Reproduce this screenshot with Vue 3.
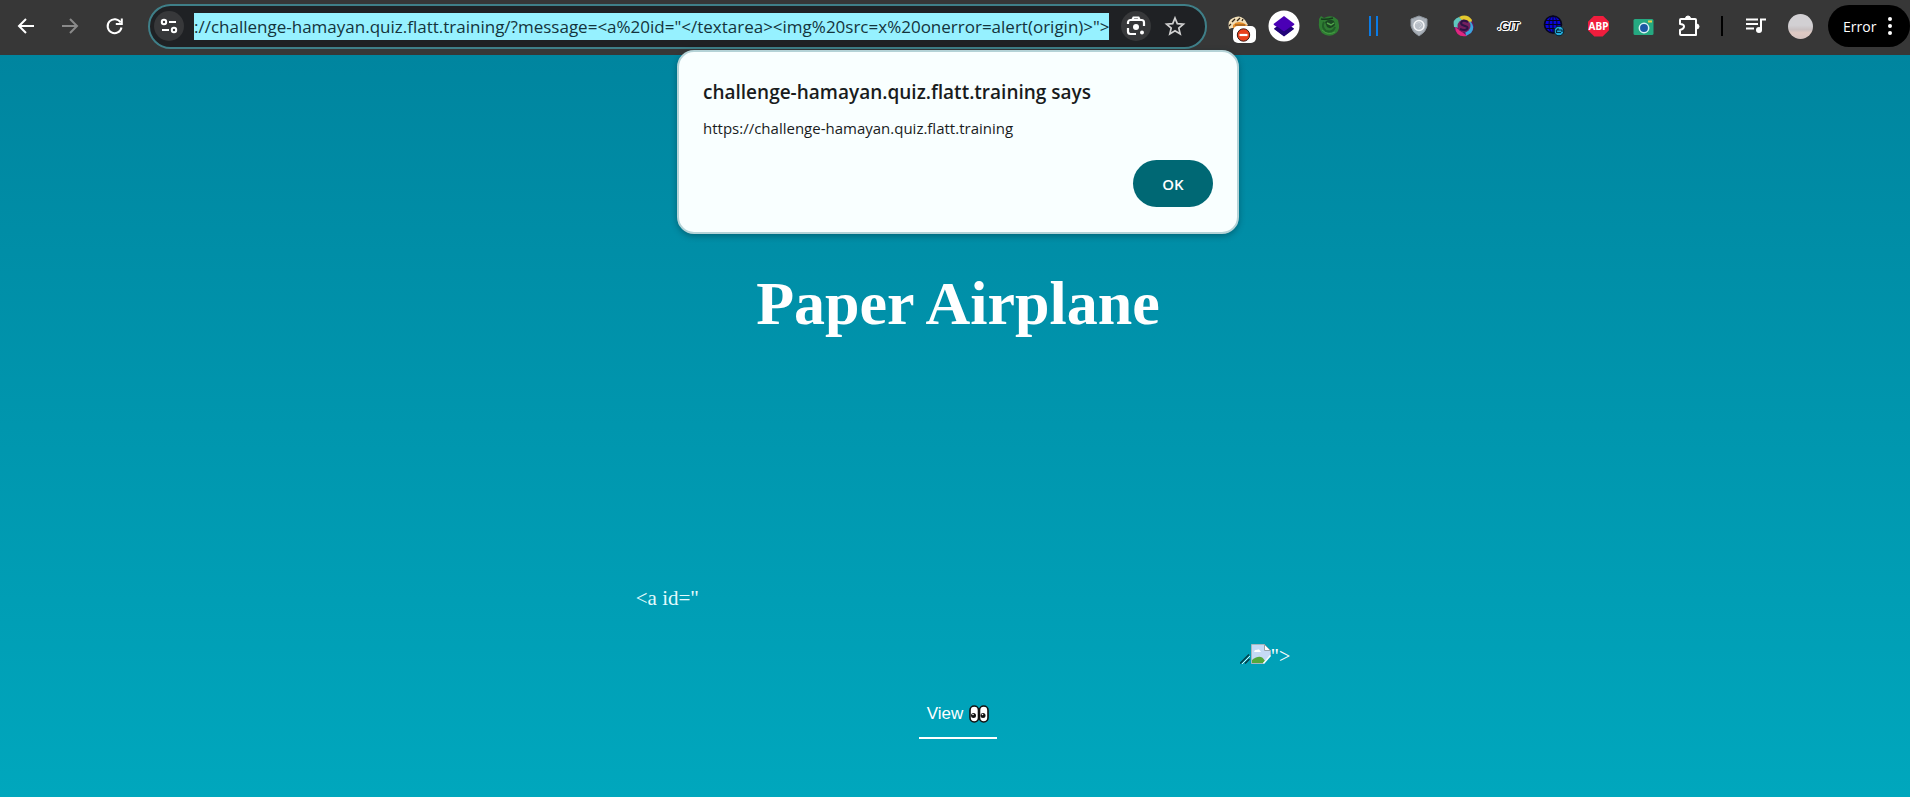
<script setup>
import { ref } from 'vue'

const address = ref('://challenge-hamayan.quiz.flatt.training/?message=<a%20id="</textarea><img%20src=x%20onerror=alert(origin)>">')
const message = ref('<a id="')
const dialogOpen = ref(true)
</script>

<template>
  <div class="browser">
    <header class="toolbar">
      <nav class="nav" aria-label="Navigation">
        <button class="nav-btn" aria-label="Back">
          <svg width="24" height="24" viewBox="0 0 24 24"><path d="M20 12H5M12 5l-7 7 7 7" fill="none" stroke="#fff" stroke-width="2" /></svg>
        </button>
        <button class="nav-btn" aria-label="Forward">
          <svg width="24" height="24" viewBox="0 0 24 24"><path d="M4 12h15M12 5l7 7-7 7" fill="none" stroke="#8a8a8a" stroke-width="2" /></svg>
        </button>
        <button class="nav-btn" aria-label="Reload">
          <svg width="24" height="24" viewBox="0 0 24 24"><path d="M18.600 8.500A7 7 0 1 0 19.500 13.500M19.800 4.500v5.400h-6" fill="none" stroke="#fff" stroke-width="2" /></svg>
        </button>
      </nav>

      <div class="omnibox">
        <button class="round" aria-label="Site information">
          <svg width="20" height="20" viewBox="0 0 20 20" fill="none" stroke="#fff" stroke-width="2"><circle cx="5" cy="6" r="2.2" /><path d="M10 6h7M3 14h7" /><circle cx="15" cy="14" r="2.2" /></svg>
        </button>
        <input v-model="address" class="address" type="text" aria-label="Address" spellcheck="false">
        <button class="round" aria-label="Search with Lens">
          <svg width="22" height="22" viewBox="0 0 22 22" fill="none" stroke="#fff" stroke-width="2.2">
            <path d="M3 9V7.500A2.500 2.500 0 0 1 5.500 5h11A2.500 2.500 0 0 1 19 7.500V11M3 13v3.500A2.500 2.500 0 0 0 5.500 19H11M7.500 4.500l1-2h5l1 2" />
            <circle cx="11" cy="12" r="3" fill="#fff" stroke="none" /><circle cx="17" cy="17.500" r="2" fill="#fff" stroke="none" />
          </svg>
        </button>
        <button class="round plain" aria-label="Bookmark this page">
          <svg width="22" height="22" viewBox="0 0 22 22"><path d="M11 3l2.300 5.600 6.100.5-4.600 4 1.400 5.900-5.200-3.200-5.200 3.200 1.400-5.900-4.600-4 6.100-.5z" fill="none" stroke="#d0d0d0" stroke-width="1.700" /></svg>
        </button>
      </div>

      <div class="extensions">
        <button class="ext" aria-label="Blocked extension">
          <svg width="36" height="36" viewBox="0 0 36 36">
            <path d="M8 21Q6 12 12 10q7-4 12 2l3 5-4 3H11z" fill="#f1dfb8" />
            <path d="M11 14l3-3m2 2l3-3m2 3l1-2M8 18l2-2" stroke="#35291c" stroke-width="1.300" />
            <path d="M12 17q5-6 14 0l-2 3H12z" fill="#e9912b" /><path d="M14 17h10" stroke="#74451a" />
            <rect x="12" y="18" width="23" height="17" rx="5" fill="#fff" />
            <circle cx="22.500" cy="27" r="6.200" fill="#e8401c" stroke="#3b1b14" /><path d="M18.500 27h8" stroke="#fff" stroke-width="2.200" />
          </svg>
        </button>
        <button class="ext" aria-label="Layers">
          <svg width="32" height="32" viewBox="0 0 32 32"><circle cx="16" cy="16" r="15.500" fill="#fff" /><path d="M6 19l4-3h12l4 3-10 7.500z" fill="#220479" /><path d="M6 15l-.5-1L16 6l10.500 8-.5 1-10 7z" fill="#4a00b5" /><path d="M6 18.500l3-2 7 5 7-5 3 2-10 7.500z" fill="#220479" /></svg>
        </button>
        <button class="ext" aria-label="Green swirl">
          <svg width="24" height="24" viewBox="0 0 24 24"><path d="M2 5l2-3 3 2q5-3 10-1l4 3 1 5q1 7-6 10-6 2-11-2-4-5-3-11z" fill="#2f7d33" /><path d="M7 8q-3 5 2 9 7 2 9-4" fill="none" stroke="#205e28" stroke-width="2" /><path d="M8 8q4-4 9-1l1 4q-4 5-8 2z" fill="#1b4823" /><path d="M10 9l4 2 3-2" fill="none" stroke="#53a64c" stroke-width="1.500" /><path d="M4 5q5 1 12-1" stroke="#153b1c" stroke-width="1.500" fill="none" /><path d="M5 16q6 6 13 2" fill="none" stroke="#459b42" /></svg>
        </button>
        <button class="ext" aria-label="Parallel bars">
          <svg width="24" height="24" viewBox="0 0 24 24"><path d="M8 2v20M15 2v20" stroke="#0a7be6" stroke-width="2" /></svg>
        </button>
        <button class="ext" aria-label="Shield">
          <svg width="24" height="24" viewBox="0 0 24 24"><path d="M12 2l8 3v7q-1 6-8 10-7-4-8-10V5z" fill="#a9b0b8" stroke="#8d949c" /><circle cx="12" cy="11.500" r="5" fill="#b9bfc7" stroke="#f4f5f7" stroke-width="1.500" /><path d="M9 10l3-2 3 3-3 3" fill="none" stroke="#cdd2d8" /></svg>
        </button>
        <button class="ext" aria-label="Color wheel">
          <svg width="24" height="24" viewBox="0 0 24 24"><circle cx="12" cy="12" r="10" fill="#5c1763" /><path d="M2 13Q0 5 7 3l5 4-4 7z" fill="#5fc7bd" /><path d="M7 3q8-4 13 3l-2 6-7-5z" fill="#e3c92e" /><path d="M18 7q6 6 1 12l-5 3-1-6z" fill="#3aa6dc" /><path d="M3 13l6 4 6 5Q4 24 3 13" fill="#e0267f" /><circle cx="12" cy="12" r="6.500" fill="#75205f" /><path d="M16 8q-6-3-7 1 0 2 4 3 4 1 2 3-2 2-7 0" fill="none" stroke="#2b1446" stroke-width="2" /></svg>
        </button>
        <button class="ext git" aria-label="Git finder">.GIT</button>
        <button class="ext" aria-label="Proxy">
          <svg width="24" height="24" viewBox="0 0 24 24" fill="none"><circle cx="11" cy="10.500" r="8.500" fill="#0904dc" stroke="#05051e" stroke-width="1.600" /><ellipse cx="11" cy="10.500" rx="4" ry="8.500" stroke="#05051e" /><path d="M2 10.500h17M4 6.500h14M4 14.500h14M11 2v16" stroke="#05051e" /><circle cx="17" cy="17" r="4.800" fill="#22a9d8" stroke="#061a25" /><path d="M20 18v-2h-5l1.500-1.500M14.500 16v2.500h4.500" stroke="#062b3b" stroke-width="1.200" /></svg>
        </button>
        <button class="ext abp" aria-label="Adblock Plus"><span>ABP</span></button>
        <button class="ext" aria-label="Screenshot">
          <svg width="24" height="24" viewBox="0 0 24 24"><rect x="1.500" y="5" width="20" height="16" rx="1.500" fill="#25a981" /><path d="M16 7.500h4" stroke="#e6cf4c" stroke-width="2" /><circle cx="12" cy="14" r="4.700" fill="#1b58a4" stroke="#d9f2f4" stroke-width="1.500" /></svg>
        </button>
        <button class="ext" aria-label="Extensions">
          <svg width="24" height="24" viewBox="0 0 24 24"><path d="M4 5h14a1 1 0 0 1 1 1v15H4a1 1 0 0 1-1-1v-4q4-1 4-3.500T3 10V6a1 1 0 0 1 1-1z" fill="none" stroke="#fff" stroke-width="2" stroke-linejoin="round" /><path d="M8.500 4.500a2.500 2.500 0 0 1 5 0M19.500 10a2.500 2.500 0 0 1 0 5" fill="#fff" stroke="#fff" /></svg>
        </button>
      </div>
      <span class="divider"></span>
      <button class="ext" aria-label="Media controls">
        <svg width="24" height="24" viewBox="0 0 24 24"><path d="M2 5.500h12M2 10h12M2 14.500h8M17 16V5.500h5" fill="none" stroke="#fff" stroke-width="2" /><circle cx="15" cy="16" r="3" fill="#fff" /></svg>
      </button>
      <button class="ext avatar" aria-label="Profile"><span></span></button>
      <button class="error">
        Error
        <svg width="6" height="20" viewBox="0 0 6 20" fill="#fff"><circle cx="3" cy="3" r="2" /><circle cx="3" cy="10" r="2" /><circle cx="3" cy="17" r="2" /></svg>
      </button>
    </header>

    <main class="page">
      <h1>Paper Airplane</h1>
      <div class="composer">
        <textarea v-model="message" aria-label="Message" spellcheck="false"></textarea>
        <svg class="grip" width="10" height="10" viewBox="0 0 10 10"><path d="M0 9.500L9 .5M5 9.500L9.500 5" stroke="#073b45" stroke-width="1.500" /><path d="M2 10L10 2" stroke="#d8f5f8" stroke-width="1" /></svg>
        <svg width="20" height="20" viewBox="0 0 20 20">
          <path d="M.5.500h13l6 6v5l-7 8H.5z" fill="#c5daf5" stroke="#a9b6bd" />
          <path d="M13.500.500v6h6z" fill="#fff" stroke="#9ba5aa" />
          <path d="M3 8q1-3 3-2 2-2 4 2z" fill="#fff" />
          <path d="M1 19v-3q9-7 13 1l-2 2z" fill="#54a83c" /><path d="M12.500 19.500l7-8" stroke="#f5ffff" stroke-width="1.500" />
        </svg>
        <span class="tail">"&gt;</span>
      </div>
      <button class="view">
        View
        <svg width="20" height="18" viewBox="0 0 20 18"><g fill="#fff" stroke="#111" stroke-width="1.600"><rect x="1" y="1" width="8.500" height="16" rx="4.200" /><rect x="10.500" y="1" width="8.500" height="16" rx="4.200" /></g><circle cx="4.500" cy="10.500" r="2.500" fill="#111" /><circle cx="14" cy="10.500" r="2.500" fill="#111" /><circle cx="4" cy="9.500" r=".8" fill="#fff" /><circle cx="13.500" cy="9.500" r=".8" fill="#fff" /></svg>
      </button>
    </main>

    <section v-if="dialogOpen" class="dialog" role="alertdialog" aria-labelledby="dialog-title" aria-describedby="dialog-text">
      <h2 id="dialog-title">challenge-hamayan.quiz.flatt.training says</h2>
      <p id="dialog-text">https://challenge-hamayan.quiz.flatt.training</p>
      <button class="ok" @click="dialogOpen = false">OK</button>
    </section>
  </div>
</template>

<style>
body {
  margin: 0;
}
</style>

<style scoped>
.browser {
  position: relative;
  display: flex;
  flex-direction: column;
  min-height: 100vh;
  font-family: "Open Sans", "Noto Sans", sans-serif;
}
button {
  padding: 0;
  border: 0;
  background: none;
  color: #fff;
  font-family: inherit;
}
svg {
  display: block;
  flex: none;
}
.toolbar {
  display: flex;
  align-items: center;
  box-sizing: border-box;
  height: 55px;
  padding: 0 0 3px 4px;
  background: #373737;
}
.nav {
  display: flex;
  margin-right: 12px;
}
.nav-btn {
  display: grid;
  place-items: center;
  width: 44px;
  height: 40px;
}
.omnibox {
  display: flex;
  flex: 1;
  align-items: center;
  min-width: 0;
  height: 41px;
  margin-right: 9px;
  padding: 0 15px 0 4px;
  border: 2px solid #3f7f88;
  border-radius: 24px;
  background: #1f2124;
}
.round {
  display: grid;
  flex: none;
  place-items: center;
  width: 30px;
  height: 30px;
  border-radius: 50%;
  background: #37383a;
}
.plain {
  margin-left: 9px;
  background: none;
}
.address {
  flex: 1;
  min-width: 0;
  height: 27px;
  margin: 0 12px 0 10px;
  padding: 0;
  border: 0;
  outline: 0;
  background: #96f1ff;
  color: #14343c;
  font-family: inherit;
  font-size: 17px;
}
.extensions {
  display: flex;
}
.ext {
  display: grid;
  flex: none;
  place-items: center;
  width: 45px;
  height: 40px;
}
.git {
  color: #111;
  font-family: "Liberation Sans", sans-serif;
  font-size: 11px;
  font-style: italic;
  font-weight: 700;
  text-shadow: 1px 0 #fff, -1px 0 #fff, 0 1px #fff, 0 -1px #fff, 1px 1px #fff, -1px -1px #fff;
}
.abp span {
  width: 21px;
  background: #f01d3d;
  clip-path: polygon(30% 0, 70% 0, 100% 30%, 100% 70%, 70% 100%, 30% 100%, 0 70%, 0 30%);
  font-family: "Noto Sans", sans-serif;
  font-size: 10px;
  font-weight: 700;
  line-height: 21px;
  text-align: center;
}
.divider {
  width: 2px;
  height: 20px;
  margin: 0 10px;
  background: #000;
}
.avatar span {
  width: 25px;
  height: 25px;
  border-radius: 50%;
  background: linear-gradient(#d2d0d3 0 45%, #c9c1c2 62%, #dfcac4 75%, #d5c4c1);
}
.error {
  display: flex;
  align-items: center;
  justify-content: space-between;
  box-sizing: border-box;
  width: 82px;
  height: 42px;
  margin-left: 5px;
  padding: 0 17px 0 15px;
  border-radius: 21px;
  background: #000;
  font-size: 14px;
}
.page {
  display: flex;
  flex: 1;
  flex-direction: column;
  align-items: center;
  padding: 212px 0 40px 6px;
  background: linear-gradient(#00859f, #00a7bd);
  color: #fff;
}
h1 {
  margin: 0;
  font-family: "Liberation Serif", serif;
  font-size: 62px;
  line-height: 72px;
}
.composer {
  display: flex;
  align-items: flex-end;
  margin-top: 239px;
  font-family: "Liberation Serif", serif;
  font-size: 20px;
  line-height: 16px;
}
textarea {
  box-sizing: border-box;
  width: 614px;
  height: 86px;
  padding: 8px 10px;
  border: 0;
  outline: 0;
  background: transparent;
  color: #e3fbfd;
  font-family: "Liberation Serif", serif;
  font-size: 21px;
  line-height: 24px;
  resize: none;
}
.grip {
  margin-right: 1px;
}
.view {
  display: flex;
  align-items: center;
  justify-content: center;
  gap: 6px;
  width: 78px;
  height: 49px;
  margin-top: 26px;
  border-bottom: 2px solid #fff;
  font-family: "Liberation Sans", sans-serif;
  font-size: 17px;
}
.dialog {
  position: absolute;
  top: 50px;
  left: calc(50% + 3px);
  box-sizing: border-box;
  width: 562px;
  padding: 26px 24px 25px;
  border: 2px solid #b5d3d7;
  border-radius: 17px;
  background: #f9ffff;
  box-shadow: 0 2px 6px rgb(0 40 50 / 40%);
  color: #191c1d;
  transform: translateX(-50%);
}
h2 {
  margin: 0;
  font-size: 19px;
  font-weight: 600;
  line-height: 28px;
}
.dialog p {
  margin: 12px 0 22px;
  font-size: 15px;
  line-height: 20px;
}
.ok {
  display: block;
  width: 80px;
  height: 47px;
  margin-left: auto;
  border-radius: 24px;
  background: #006874;
  font-size: 15px;
  font-weight: 600;
}
</style>
